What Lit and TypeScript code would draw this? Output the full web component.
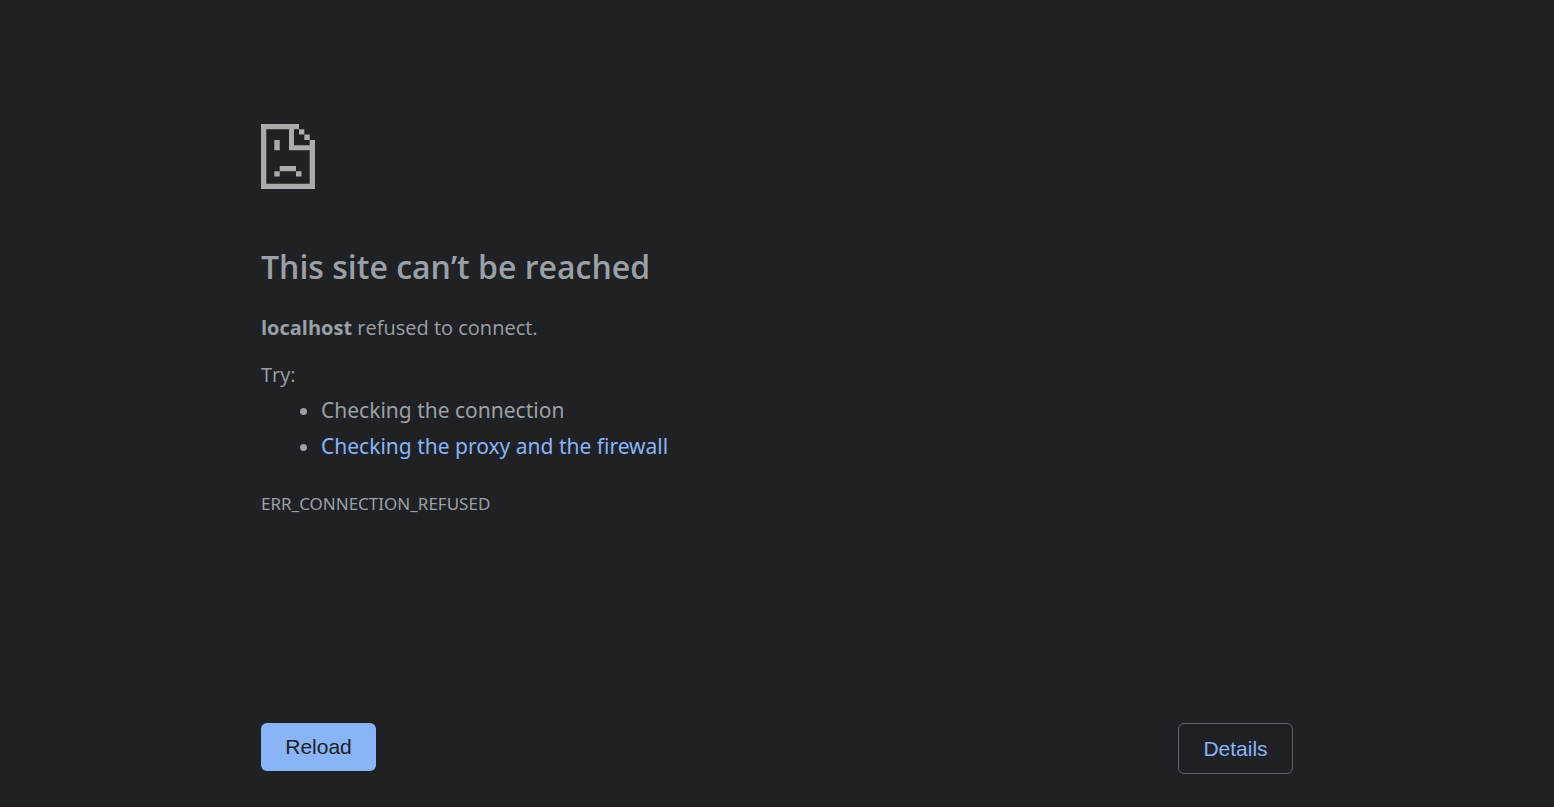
import { LitElement, html, css } from "lit";
import { customElement } from "lit/decorators.js";

@customElement("app-root")
export class AppRoot extends LitElement {
  static styles = css`
    :host {
      display: block;
      box-sizing: border-box;
      min-height: 100vh;
      padding: 124px 24px 32px;
      background: #202124;
      border-bottom: 1px solid #1d191b;
      color: #9aa0a6;
      font-family: "Segoe UI", "Open Sans", "Noto Sans", sans-serif;
    }
    .content {
      max-width: 1032px;
      margin: 0 auto;
    }
    .icon {
      display: block;
      width: 54px;
      height: 65px;
      fill: #ababab;
    }
    .title {
      margin: 54px 0 0;
      font-size: 32px;
      font-weight: 600;
      line-height: 48px;
    }
    .text {
      margin: 21px 0 0;
      font-size: 20px;
      line-height: 32px;
    }
    .try {
      margin: 15px 0 0;
      font-size: 20px;
      line-height: 32px;
    }
    .list {
      margin: 0;
      padding: 1px 0 0 60px;
      font-family: "Segoe UI", "Noto Sans", sans-serif;
      font-size: 21px;
      line-height: 36px;
    }
    .link {
      color: #8ab4f8;
      text-decoration: none;
    }
    .code {
      margin: 28px 0 0;
      font-family: "Segoe UI", "Noto Sans", sans-serif;
      font-size: 17px;
      line-height: 24px;
    }
    .actions {
      display: flex;
      justify-content: space-between;
      align-items: flex-start;
      margin-top: 207px;
    }
    .button {
      box-sizing: border-box;
      min-width: 115px;
      padding: 12px 24px;
      border: 0;
      border-radius: 6px;
      background: #8ab4f8;
      color: #202124;
      font-family: Arial, "Liberation Sans", sans-serif;
      font-size: 21px;
      line-height: 24px;
      cursor: pointer;
    }
    .secondary {
      padding: 13px 24px 12px;
      border: 1px solid #5f6368;
      background: transparent;
      color: #8ab4f8;
    }
  `;

  render() {
    return html`
      <main class="content">
        <svg class="icon" viewBox="0 0 54 65" aria-hidden="true">
          <path
            d="M0 0H38V5.3H33V21.3H48.7V16H54V65H0ZM5.3 5.3V59.7H48.7V26.3H28V5.3Z"
            fill-rule="evenodd"
          />
          <path
            d="M38 5.3h5.3v5.3H38zM43.3 10.6h5.4V16h-5.4zM13.3 16h5.4v10.3h-5.4zM18.7 42H35v5.3H18.7zM13.3 47.3h5.4v5.2h-5.4zM35 47.3h5.5v5.2H35z"
          />
        </svg>
        <h1 class="title">This site can’t be reached</h1>
        <p class="text"><strong>localhost</strong> refused to connect.</p>
        <p class="try">Try:</p>
        <ul class="list">
          <li>Checking the connection</li>
          <li><a class="link" href="#buttons">Checking the proxy and the firewall</a></li>
        </ul>
        <p class="code">ERR_CONNECTION_REFUSED</p>
        <div class="actions" id="buttons">
          <button class="button" type="button">Reload</button>
          <button class="button secondary" type="button">Details</button>
        </div>
      </main>
    `;
  }
}
